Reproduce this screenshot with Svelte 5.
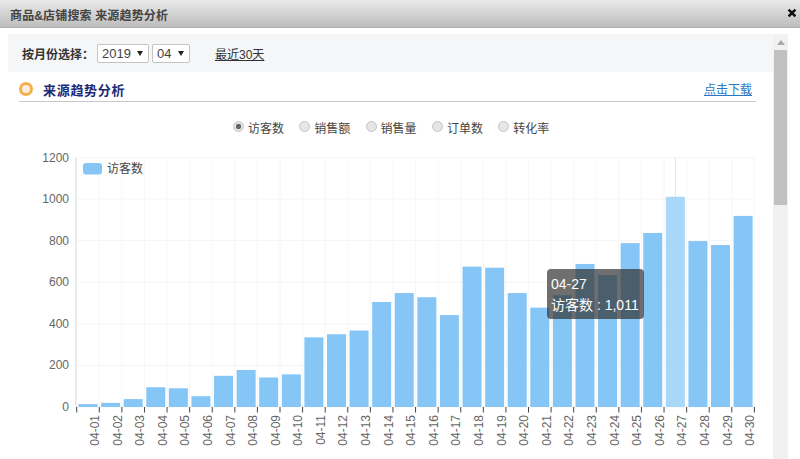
<script>
  const values = [14, 20, 38, 95, 90, 52, 150, 178, 142, 157, 335, 350, 368, 505, 548, 528, 442, 675, 670, 548, 478, 538, 688, 635, 788, 837, 1011, 798, 779, 919];
  const metrics = ["访客数", "销售额", "销售量", "订单数", "转化率"];
  const yTicks = [0, 200, 400, 600, 800, 1000, 1200];

  const X0 = 76.7;
  const STEP = 22.59;
  const Y0 = 407;
  const SCALE = 249.5 / 1200;
  const ACTIVE = 26;

  const yOf = (v) => Y0 - v * SCALE;
  const label = (i) => "04-" + String(i + 1).padStart(2, "0");
</script>

<div class="dialog">
  <header class="titlebar">
    <span>商品&店铺搜索 来源趋势分析</span>
    <svg class="close" viewBox="0 0 10 10" width="10" height="10">
      <path d="M1.6 1.6L8.4 8.4M8.4 1.6L1.6 8.4" stroke="#111" stroke-width="2.6" />
    </svg>
  </header>

  <div class="body">
    <main class="content">
      <div class="filter">
        <span class="filter-label">按月份选择：</span>
        <span class="select year"><select><option>2019</option></select></span>
        <span class="select month"><select><option>04</option></select></span>
        <a class="recent" href="#recent">最近30天</a>
      </div>

      <div class="section-head">
        <span class="dot"></span>
        <h2>来源趋势分析</h2>
        <a class="download" href="#download">点击下载</a>
      </div>

      <div class="metrics">
        {#each metrics as m, i}
          <label class="metric">
            <input type="radio" name="metric" checked={i === 0} />
            <span>{m}</span>
          </label>
        {/each}
      </div>

      <div class="chart">
        <svg viewBox="8 146 765 313" width="765" height="313">
          {#each yTicks as t}
            <line x1={X0} x2={X0 + STEP * 30} y1={yOf(t)} y2={yOf(t)} stroke="#f5f5f5" />
            <text class="tick" x="69" y={yOf(t) + 4} text-anchor="end">{t}</text>
          {/each}
          {#each values as _, i}
            <line x1={X0 + STEP * (i + 1)} x2={X0 + STEP * (i + 1)} y1="157.5" y2={Y0} stroke="#f6f6f6" />
          {/each}
          <line x1={X0 + STEP * (ACTIVE + 0.5)} x2={X0 + STEP * (ACTIVE + 0.5)} y1="157.5" y2={Y0} stroke="#e6e6e6" />
          <line x1={X0 - 0.7} x2={X0 - 0.7} y1="157.5" y2={Y0 + 1} stroke="#e4e4e4" stroke-width="1.5" />

          {#each values as v, i}
            <rect
              x={X0 + STEP * i + 1.8}
              y={yOf(v)}
              width="19"
              height={v * SCALE}
              fill={i === ACTIVE ? "#a9d7f8" : "#86c6f6"}
            />
          {/each}

          {#each { length: 31 } as _, i}
            <line x1={X0 + STEP * i} x2={X0 + STEP * i} y1={Y0} y2={Y0 + 5.5} stroke="#444" />
          {/each}
          {#each values as _, i}
            <text
              class="tick"
              text-anchor="end"
              transform="translate({X0 + STEP * (i + 0.5) + 11} 415) rotate(-90)">{label(i)}</text>
          {/each}

          <rect x="83" y="163" width="19" height="11.5" rx="3" fill="#86c6f6" />
          <text class="legend" x="107" y="173">访客数</text>
        </svg>
        <div class="tooltip">
          <div class="tip-date">04-27</div>
          <div class="tip-value">访客数 : 1,011</div>
        </div>
      </div>
    </main>

    <div class="scrollbar">
      <svg class="arrow" viewBox="0 0 8 5" width="8" height="5"><path d="M4 0L8 5H0Z" fill="#a8a8a8" /></svg>
      <div class="thumb"></div>
    </div>
  </div>
</div>

<style>
  :global(body) {
    margin: 0;
    background: #fff;
  }
  .dialog {
    width: 800px;
    height: 459px;
    overflow: hidden;
    display: flex;
    flex-direction: column;
    font-family: "Liberation Sans", "Noto Sans CJK SC", sans-serif;
    color: #333;
  }
  .titlebar {
    height: 28px;
    flex: none;
    box-sizing: border-box;
    display: flex;
    align-items: center;
    justify-content: space-between;
    padding: 2px 3px 0 10px;
    background: linear-gradient(#e9e9e9, #bdbdbd);
    border-bottom: 1px solid #b0b0b0;
    font-size: 12px;
    font-weight: bold;
    letter-spacing: 0.15px;
    color: #444;
  }
  .close {
    margin-top: -3px;
  }
  .body {
    flex: 1;
    display: flex;
    min-height: 0;
    padding: 6px 12px 0 8px;
  }
  .content {
    width: 765px;
    flex: none;
    overflow: hidden;
  }
  .filter {
    height: 38px;
    display: flex;
    align-items: center;
    padding-left: 14px;
    background: #f5f6f8;
  }
  .filter-label {
    font-size: 12px;
    font-weight: bold;
    color: #333;
    width: 75px;
  }
  .select {
    position: relative;
    display: block;
    height: 19px;
  }
  .select::after {
    content: "";
    position: absolute;
    right: 6px;
    top: 7px;
    border-style: solid;
    border-width: 5px 3.5px 0;
    border-color: #222 transparent transparent;
  }
  select {
    appearance: none;
    display: block;
    width: 100%;
    height: 19px;
    box-sizing: border-box;
    padding: 0 0 0 4px;
    font-family: "Liberation Sans", sans-serif;
    font-size: 13px;
    color: #444;
    background: #fff;
    border: 1px solid #c4c4c4;
    border-radius: 2px;
  }
  .year {
    width: 52px;
  }
  .month {
    width: 38px;
    margin-left: 3px;
  }
  .recent {
    margin-left: 25px;
    font-size: 12px;
    color: #333;
  }
  .section-head {
    height: 30px;
    box-sizing: border-box;
    padding-top: 4px;
    margin: 0 17px 0 11px;
    display: flex;
    align-items: center;
    border-bottom: 1px solid #c8c8c8;
  }
  .dot {
    width: 8px;
    height: 8px;
    border: 3px solid #f3b04e;
    border-radius: 50%;
    background: #fbeedd;
  }
  h2 {
    margin: 2px 0 0 10px;
    font-size: 13px;
    font-weight: bold;
    letter-spacing: 0.7px;
    color: #1b2a78;
  }
  .download {
    margin: 0 4px 0 auto;
    font-size: 12px;
    color: #2a76c4;
  }
  .metrics {
    display: flex;
    margin: 15px 0 0 225px;
    height: 20px;
    align-items: center;
  }
  .metric {
    display: flex;
    align-items: center;
    width: 66.3px;
    font-size: 12px;
    color: #444;
  }
  .metric input {
    appearance: none;
    width: 11px;
    height: 11px;
    margin: -2px 4px 0 0;
    border: 1px solid #c4c4c4;
    border-radius: 50%;
    background: #e6e6e6;
    flex: none;
  }
  .metric input:checked {
    background: radial-gradient(circle, #666 0 2.5px, #e4e4e4 3px);
  }
  .chart {
    position: relative;
    margin-top: 9px;
    height: 313px;
  }
  .chart svg {
    display: block;
  }
  .tick {
    font-size: 12px;
    fill: #666;
  }
  .legend {
    font-size: 12px;
    fill: #444;
  }
  .tooltip {
    position: absolute;
    left: 539px;
    top: 123px;
    width: 97px;
    height: 50px;
    box-sizing: border-box;
    padding: 5px 4px;
    border-radius: 4px;
    background: rgba(50, 50, 50, 0.7);
    color: #fff;
    font-size: 14px;
    line-height: 21px;
    white-space: nowrap;
  }
  .scrollbar {
    width: 15px;
    flex: none;
    background: #f1f1f1;
    display: flex;
    flex-direction: column;
    align-items: center;
  }
  .arrow {
    margin-top: 6px;
  }
  .thumb {
    width: 13px;
    height: 155px;
    margin-top: 5px;
    background: #c1c1c1;
  }
</style>
